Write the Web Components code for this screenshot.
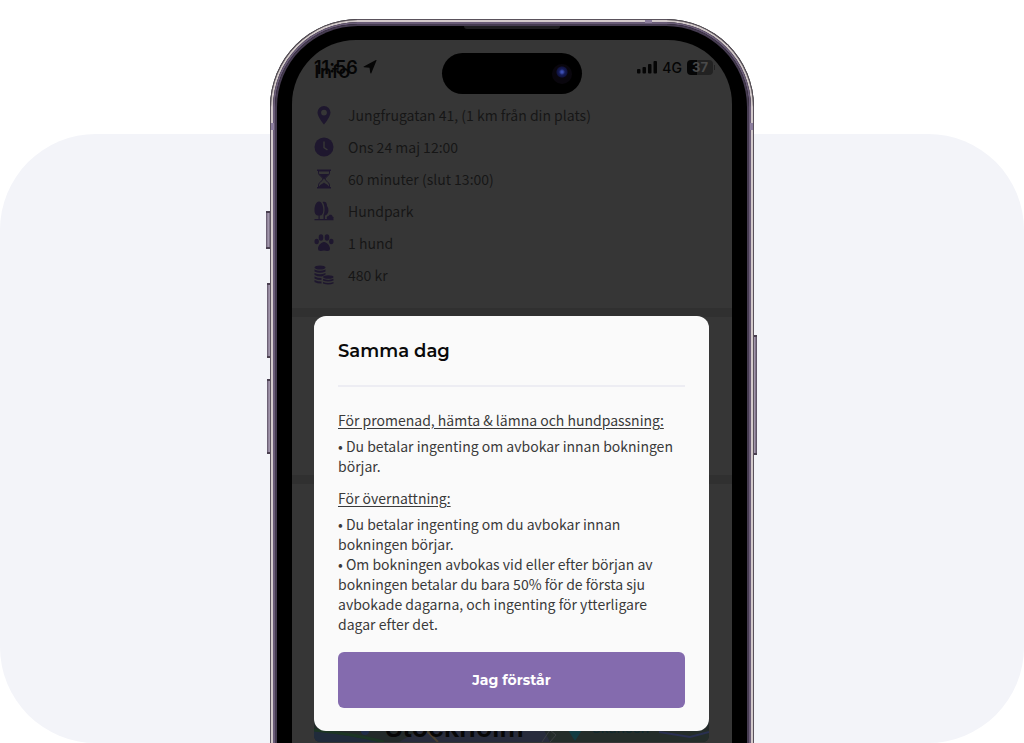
<!DOCTYPE html>
<html lang="sv">
<head>
<meta charset="utf-8">
<meta name="viewport" content="width=device-width, initial-scale=1">
<title>Samma dag</title>
<style>
  body { margin: 0; background: #fff; font-family: "Noto Sans CJK KR", "Noto Sans", sans-serif; }
</style>
</head>
<body>
<app-stage>
  <phone-frame>
    <status-bar slot="status"></status-bar>
    <booking-page>
      <info-row icon="pin">Jungfrugatan 41, (1 km från din plats)</info-row>
      <info-row icon="clock">Ons 24 maj 12:00</info-row>
      <info-row icon="glass">60 minuter (slut 13:00)</info-row>
      <info-row icon="park">Hundpark</info-row>
      <info-row icon="paw">1 hund</info-row>
      <info-row icon="coins">480 kr</info-row>
    </booking-page>
    <policy-dialog slot="overlay">
      <span slot="title">Samma dag</span>
      <policy-section>
        <span slot="heading">För promenad, hämta &amp; lämna och hundpassning:</span>
        <div>• Du betalar ingenting om avbokar innan bokningen börjar.</div>
      </policy-section>
      <policy-section>
        <span slot="heading">För övernattning:</span>
        <div>• Du betalar ingenting om du avbokar innan bokningen börjar.</div>
        <div>• Om bokningen avbokas vid eller efter början av bokningen betalar du bara 50% för de första sju avbokade dagarna, och ingenting för ytterligare dagar efter det.</div>
      </policy-section>
      <span slot="action">Jag förstår</span>
    </policy-dialog>
  </phone-frame>
</app-stage>

<script>
const define = (name, html, setup) => customElements.define(name, class extends HTMLElement {
  constructor() {
    super();
    this.attachShadow({ mode: "open" }).innerHTML = html;
  }
  connectedCallback() { if (setup) setup(this, this.shadowRoot); }
});

define("app-stage", `
<style>
  :host { display: grid; overflow: hidden; }
  .panel, main { grid-area: 1 / 1; }
  .panel { margin-top: 134px; background: #f3f4f9; border-radius: 96px; }
  main { position: relative; padding-top: 19px; display: flex; justify-content: center; }
</style>
<div class="panel"></div>
<main><slot></slot></main>`);

define("phone-frame", `
<style>
  :host { display: block; box-sizing: border-box; width: 100%; max-width: 484px; position: relative; }
  .shell { position: relative; background: #000; padding: 21px 22px 0; border-radius: 88px 88px 0 0; }
  .rim { position: absolute; inset: 0; border-radius: inherit; border: 1px solid #5a525c; border-bottom: 0; }
  .rim i { position: absolute; inset: 0; border-radius: 87px 87px 0 0; border: 2px solid #d3cacb; border-bottom: 0; }
  .rim b { position: absolute; inset: 2px 2px 0; border-radius: 85px 85px 0 0; border: 2px solid #6a5c78; border-bottom: 0; }
  .rim u { position: absolute; inset: 4px 4px 0; border-radius: 83px 83px 0 0; border: 2px solid #463c51; border-bottom: 0; }
  .speaker { position: absolute; top: 7px; left: 194px; right: 194px; height: 3px; background: #1d1d1f; border-radius: 0 0 3px 3px; }
  .screen { position: relative; display: grid; background: #363636; border-radius: 64px 64px 0 0; overflow: hidden; }
  .page, .overlay { grid-area: 1 / 1; min-width: 0; }
  .page { display: grid; }
  .overlay { position: relative; padding: 276px 23px 12px 22px; }
  .status { position: absolute; top: 0; left: 0; right: 0; }
  .key { position: absolute; box-sizing: border-box; width: 5px; background: linear-gradient(90deg, #5b5064, #a99db4 45%, #4e4457); border: solid #493f50; border-width: 2px 0; }
  .k1 { left: -4px; top: 192px; height: 38px; }
  .k2 { left: -3px; top: 264px; height: 75px; }
  .k3 { left: -3px; top: 360px; height: 75px; }
  .k4 { right: -3px; top: 316px; height: 120px; }
  .band { position: absolute; background: #8d7f9e; }
  .a1 { left: 375px; top: 1px; width: 7px; height: 3px; }
  .a2 { left: 1px; top: 104px; width: 3px; height: 7px; }
  .a3 { right: 1px; top: 104px; width: 3px; height: 7px; }
</style>
<span class="key k1"></span><span class="key k2"></span><span class="key k3"></span><span class="key k4"></span>
<div class="shell">
  <div class="rim"><i></i><b></b><u></u></div>
  <span class="band a1"></span><span class="band a2"></span><span class="band a3"></span>
  <div class="speaker"></div>
  <div class="screen">
    <div class="page"><slot></slot></div>
    <div class="status"><slot name="status"></slot></div>
    <div class="overlay"><slot name="overlay"></slot></div>
  </div>
</div>`);

define("status-bar", `
<style>
  :host { display: grid; grid-template-columns: 1fr auto 1fr; align-items: start; padding-top: 13px; color: #050505; font-family: Inter, sans-serif; }
  .left { display: flex; align-items: center; gap: 5px; height: 28px; padding-left: 22px; font-size: 18px; font-weight: 600; }
  .right { display: flex; align-items: center; justify-content: flex-end; gap: 5px; height: 28px; padding-right: 17px; font-size: 14px; font-weight: 500; }
  .island { display: flex; align-items: center; justify-content: flex-end; box-sizing: border-box; width: 140px; height: 41px; padding-right: 10px; border-radius: 21px; background: #000; }
  .lens { width: 20px; height: 20px; border-radius: 50%; background: radial-gradient(circle at 50% 40%, #3c4fb4 0 1px, #161c58 3px, #101340 5px, #09060d 6px); }
  .battery { width: 26px; height: 15px; line-height: 15px; border-radius: 4px; background: linear-gradient(90deg, #050505 10px, #222 10px); color: #4a4a4a; font-size: 13px; font-weight: 700; text-align: center; }
  .power { display: flex; align-items: center; gap: 1px; }
  .tip { width: 1px; height: 5px; background: #222; }
</style>
<div class="left"><span>11:56</span>
  <svg width="14" height="14" viewBox="0 0 14 14" fill="currentColor" aria-hidden="true"><path d="M13.5.6 8.300 13.3c-.2.4-.9.4-1-.2L6.500 7.800 1 7.3C.4 7.3.4 6.600.8 6.400L12.900.100c.4-.2.8 0 .6.500z"/></svg>
</div>
<div class="island"><span class="lens"></span></div>
<div class="right">
  <svg width="20" height="13" viewBox="0 0 20 13" fill="currentColor" aria-hidden="true"><rect y="8" width="3.500" height="4.500" rx="1"/><rect x="5.500" y="6" width="3.500" height="6.500" rx="1"/><rect x="11" y="3" width="3.500" height="9.500" rx="1"/><rect x="16.500" width="3.500" height="12.500" rx="1"/></svg>
  <span>4G</span>
  <span class="power"><span class="battery">37</span><span class="tip"></span></span>
</div>`);

define("booking-page", `
<style>
  :host { display: flex; flex-direction: column; padding: 20px 23px 1px 22px; color: #161616; }
  h1 { margin: 0 0 12px; font: 600 18px/24px Montserrat, Inter, sans-serif; color: #060606; }
  .list { display: flex; flex-direction: column; margin-top: 3px; }
  .band { height: 9px; margin: 0 -23px; background: #303030; }
  .list + .band { margin-top: 17px; }
  .gap { height: 158px; }
  map-preview { margin-top: auto; }
</style>
<h1>Info</h1>
<div class="list"><slot></slot></div>
<div class="band"></div><div class="gap"></div><div class="band"></div>
<map-preview></map-preview>`);

define("map-preview", `
<style>
  :host { position: relative; display: flex; align-items: flex-end; gap: 68px; height: 60px; overflow: hidden; border-radius: 0 0 6px 6px; background: #232a2a; font-family: Inter, sans-serif; }
  svg { position: absolute; inset: 0; width: 100%; height: 100%; }
  .city { position: relative; margin-left: 71px; font-size: 27px; line-height: 28px; font-weight: 600; color: #070707; }
  .place { position: relative; padding-bottom: 4px; font-size: 14px; line-height: 20px; font-weight: 500; color: #12282d; }
</style>
<svg viewBox="0 0 395 60" preserveAspectRatio="none" aria-hidden="true">
  <path d="M0 48l70 12H0z" fill="#202b3b"/><path d="M0 48q40 4 70 12" fill="none" stroke="#1c3524" stroke-width="3"/>
  <path d="M85 60l20-12h125l6 12z" fill="#282c3c"/>
  <path d="M112 48l12 12" stroke="#4a4030" stroke-width="2"/>
  <path d="M237 48h158v12H237z" fill="#242d2a"/>
  <path d="M228 60l8-12 6 5-6 7" stroke="#3b3f42" fill="none" stroke-width="1"/>
  <path d="M254 48h14l-7 11z" fill="#123c42"/>
  <path d="M345 50l31 5 19-5" stroke="#293050" fill="none" stroke-width="2"/>
  <circle cx="51" cy="49" r="4" fill="#202c48"/>
</svg>
<span class="city">Stockholm</span><span class="place">Skansen</span>`);

const icons = {
  pin: '<path fill-rule="evenodd" d="M10 1a6.500 6.500 0 0 0-6.500 6.500C3.500 12 10 19.500 10 19.500s6.500-7.500 6.500-12A6.500 6.500 0 0 0 10 1zm0 3.700a2.900 2.900 0 1 1 0 5.800 2.900 2.900 0 0 1 0-5.800z"/>',
  clock: '<circle cx="10" cy="10" r="9.500"/><path d="M10 4.500V10.500l3.500 2.500" fill="none" stroke="#363636" stroke-width="1.500"/>',
  glass: '<path d="M3 .5h14v1.500H3zM3 18h14v1.500H3z"/><path d="M4.500 2v2c0 3 4.500 4 4.500 6s-4.500 3-4.500 6v2h11v-2c0-3-4.500-4-4.500-6s4.500-3 4.500-6V2z" fill="none" stroke="currentColor"/><path d="M5 5h10c-1 2-4 3-4.500 5h-1C9 8 6 7 5 5zM5 18c1-3 4-3 5-4.500 1 1.500 4 1.500 5 4.500z"/>',
  park: '<path d="M5 .5C2 .5.500 5 .500 9s1.500 5.500 4 5.500V18h1.200v-3.500C8.300 14.500 9.300 12.500 9.300 9S8 .5 5 .5z"/><path d="M8.500 1c3-1 4.500.5 4.500 4 2.300 3 2 8.500-2 9.500V18H9.500v-4c1-2 1.200-5 1-7.500C10.200 4 9.500 2 8.500 1zM13 18c-1-2 .5-3 1.500-3 1-2 4-1.500 4 .5 1.500.5 1.500 2 .5 2.500z"/><path d="M.5 18h19v1.300H.5z"/>',
  paw: '<ellipse cx="2.700" cy="8.500" rx="2.200" ry="2.800"/><ellipse cx="7" cy="4.500" rx="2.300" ry="3.200"/><ellipse cx="13" cy="4.500" rx="2.300" ry="3.200"/><ellipse cx="17.300" cy="8.500" rx="2.200" ry="2.800"/><path d="M10 9c-3 0-6 4-6 6.500S6 18 7 18s2-.5 3-.5 2 .5 3 .5 3 0 3-2.500S13 9 10 9z"/>',
  coins: '<ellipse cx="6" cy="2.500" rx="5.500" ry="2"/><path d="M.5 4.500q5.500 2.500 11 0v2q-5.500 2.500-11 0zM.5 8q5.500 2.500 11 0v1.500L8 11.500Q3 11.500.5 10zM.5 11.500q3 1.500 7 1.500v2Q3 15 .5 13.500zM.5 15q3 1.500 7 1.500v2Q3 18.500.5 17z"/><ellipse cx="14.300" cy="12" rx="5.200" ry="1.800"/><path d="M9 13.800q5.300 2.200 10.500 0v1.700q-5.200 2.200-10.500 0zM9 17q5.300 2 10.500 0v1.500q-5.200 2.200-10.500 0z"/>'
};
define("info-row", `
<style>
  :host { display: flex; align-items: center; gap: 14px; height: 32px; font-size: 14px; line-height: 20px; }
  svg { flex: none; width: 20px; height: 20px; fill: currentColor; color: #1e172e; }
</style>
<svg viewBox="0 0 20 20" aria-hidden="true"></svg>
<span><slot></slot></span>`, (el, root) => {
  root.querySelector("svg").innerHTML = icons[el.getAttribute("icon")];
});

define("policy-section", `
<style>
  :host { display: flex; flex-direction: column; gap: 6px; font-size: 14px; line-height: 20px; color: #3a3a3a; }
  h3 { margin: 0; font: inherit; text-decoration: underline; text-underline-offset: 2px; }
</style>
<h3><slot name="heading"></slot></h3>
<div><slot></slot></div>`);

define("policy-dialog", `
<style>
  :host { display: block; box-sizing: border-box; padding: 24px 24px 23px; border-radius: 12px; background: #fafafa; }
  h2 { margin: 0; padding-bottom: 23px; border-bottom: 2px solid #ededf3; font: 600 18px/22px Montserrat, Inter, sans-serif; color: #0a0a0a; }
  .body { display: flex; flex-direction: column; gap: 12px; padding: 23px 8px 18px 0; }
  button { display: block; width: 100%; height: 56px; border: 0; border-radius: 6px; background: #846bae; color: #fff; font: 700 14px/20px Montserrat, Inter, sans-serif; cursor: pointer; }
</style>
<section role="dialog" aria-labelledby="title">
  <h2 id="title"><slot name="title"></slot></h2>
  <div class="body"><slot></slot></div>
  <button type="button"><slot name="action"></slot></button>
</section>`);
</script>
</body>
</html>
